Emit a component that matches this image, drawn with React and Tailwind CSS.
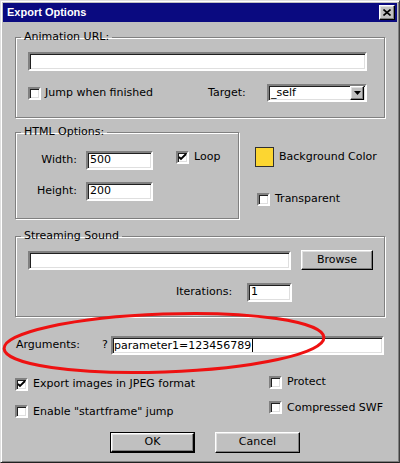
import React from "react";

const sunken =
  "bg-white border-2 border-t-[#808080] border-l-[#808080] border-r-white border-b-white shadow-[inset_1px_1px_0_#202020,inset_-1px_-1px_0_#dfdfdf]";
const raised =
  "bg-[#c0c0c0] border border-t-white border-l-white border-r-black border-b-black shadow-[inset_-1px_-1px_0_#808080,inset_1px_1px_0_#dfdfdf]";
const group =
  "border border-[#808080] shadow-[1px_1px_0_#fff,inset_1px_1px_0_#fff]";

function Check({ checked }) {
  return (
    <span className={`${sunken} w-[13px] h-[13px] shrink-0 flex items-center justify-center`}>
      {checked && (
        <svg width="9" height="9" viewBox="0 0 9 9">
          <path d="M1 4 L3 6 L8 1" stroke="#000" strokeWidth="1.8" fill="none" />
        </svg>
      )}
    </span>
  );
}

function Field({ value, className }) {
  return (
    <div className={`${sunken} h-[19px] flex items-center pl-[2px] shrink-0 ${className}`}>
      {value}
    </div>
  );
}

function Group({ title, className, inner, children }) {
  return (
    <fieldset className={`${group} ${className}`}>
      <legend className="ml-[5px] px-[3px] leading-[12px]">{title}</legend>
      <div className={inner}>{children}</div>
    </fieldset>
  );
}

export default function App() {
  return (
    <div className="w-[400px] h-[463px] bg-[#c0c0c0] text-black text-[11px] whitespace-nowrap font-['DejaVu_Sans',sans-serif] border border-t-[#dfdfdf] border-l-[#dfdfdf] border-r-[#404040] border-b-[#202020] shadow-[inset_1px_1px_0_#fff,inset_-1px_-1px_0_#808080] p-[2px] flex flex-col overflow-hidden relative">
      {/* title bar */}
      <div className="h-[19px] bg-[#0a0a80] flex items-center justify-between pl-[4px] pr-[2px]">
        <span className="text-white font-bold text-[11px] font-['Liberation_Sans',sans-serif]">Export Options</span>
        <div className={`${raised} w-[16px] h-[15px] flex items-center justify-center`}>
          <svg width="8" height="7" viewBox="0 0 8 7">
            <path d="M0.5 0.5 L7.5 6.5 M7.5 0.5 L0.5 6.5" stroke="#000" strokeWidth="1.6" />
          </svg>
        </div>
      </div>

      <div className="flex flex-col pl-[12px] pr-[12px]">
        {/* Animation URL */}
        <Group title="Animation URL:" className="mt-[9px] h-[87px]" inner="pl-[12px] pt-[9px]">
          <Field value="" className="w-[339px]" />
          <div className="flex items-center mt-[13px]">
            <Check />
            <span className="ml-[4px] w-[163px]">Jump when finished</span>
            <span className="w-[59px]">Target:</span>
            <div className={`${sunken} h-[18px] w-[100px] flex items-center justify-between pl-[2px] pr-[1px]`}>
              <span>_self</span>
              <div className={`${raised} w-[14px] h-[14px] flex items-center justify-center`}>
                <svg width="7" height="4" viewBox="0 0 7 4">
                  <path d="M0 0 H7 L3.5 4 Z" fill="#000" />
                </svg>
              </div>
            </div>
          </div>
        </Group>

        {/* HTML Options row */}
        <div className="flex mt-[8px]">
          <Group title="HTML Options:" className="w-[224px] h-[93px]" inner="pt-[13px]">
            <div className="flex">
              <div className="flex flex-col">
                <div className="flex items-center">
                  <span className="w-[61px] text-right">Width:</span>
                  <Field value="500" className="ml-[9px] w-[67px]" />
                </div>
                <div className="flex items-center mt-[12px]">
                  <span className="w-[61px] text-right">Height:</span>
                  <Field value="200" className="ml-[9px] w-[67px]" />
                </div>
              </div>
              <div className="flex items-center ml-[23px] h-[12px]">
                <Check checked />
                <span className="ml-[5px]">Loop</span>
              </div>
            </div>
          </Group>
          <div className="flex flex-col ml-[16px] pt-[21px]">
            <div className="flex items-center">
              <span className="w-[19px] h-[20px] bg-[#fcd631] border border-[#303030]" />
              <span className="ml-[5px]">Background Color</span>
            </div>
            <div className="flex items-center mt-[24px] ml-[2px]">
              <Check />
              <span className="ml-[5px]">Transparent</span>
            </div>
          </div>
        </div>

        {/* Streaming Sound */}
        <Group title="Streaming Sound" className="mt-[11px] h-[87px]" inner="pl-[12px] pt-[8px]">
          <div className="flex items-center">
            <Field value="" className="w-[263px]" />
            <div className={`${raised} ml-[10px] w-[72px] h-[20px] flex items-center justify-center`}>Browse</div>
          </div>
          <div className="flex items-center mt-[13px] pl-[148px]">
            <span className="w-[71px]">Iterations:</span>
            <Field value="1" className="w-[45px]" />
          </div>
        </Group>

        {/* Arguments */}
        <div className="flex items-center mt-[19px] pl-[1px]">
          <span className="w-[86px]">Arguments:</span>
          <span className="w-[9px]">?</span>
          <div className={`${sunken} h-[19px] w-[273px] flex items-center pl-[1px]`}>
            <span className="border-r border-black pr-[1px] leading-[13px]">parameter1=123456789</span>
          </div>
        </div>

        {/* options */}
        <div className="flex mt-[21px]">
          <div className="flex flex-col w-[254px]">
            <div className="flex items-center">
              <Check checked />
              <span className="ml-[5px]">Export images in JPEG format</span>
            </div>
            <div className="flex items-center mt-[11px]">
              <Check />
              <span className="ml-[5px]">Enable "startframe" jump</span>
            </div>
          </div>
          <div className="flex flex-col -mt-[2px]">
            <div className="flex items-center">
              <Check />
              <span className="ml-[5px]">Protect</span>
            </div>
            <div className="flex items-center mt-[9px]">
              <Check />
              <span className="ml-[5px]">Compressed SWF</span>
            </div>
          </div>
        </div>

        {/* buttons */}
        <div className="flex mt-[12px] pl-[95px]">
          <div className="w-[85px] h-[21px] border border-black">
            <div className={`${raised} h-full flex items-center justify-center`}>OK</div>
          </div>
          <div className={`${raised} ml-[20px] w-[85px] h-[21px] flex items-center justify-center`}>Cancel</div>
        </div>
      </div>

      {/* red annotation ellipse */}
      <svg className="absolute left-0 top-[308px] pointer-events-none" width="340" height="70" viewBox="0 0 340 70">
        <ellipse cx="163" cy="34" rx="160" ry="29" fill="none" stroke="#ee1111" strokeWidth="3" transform="rotate(-2 163 34)" />
      </svg>
    </div>
  );
}
